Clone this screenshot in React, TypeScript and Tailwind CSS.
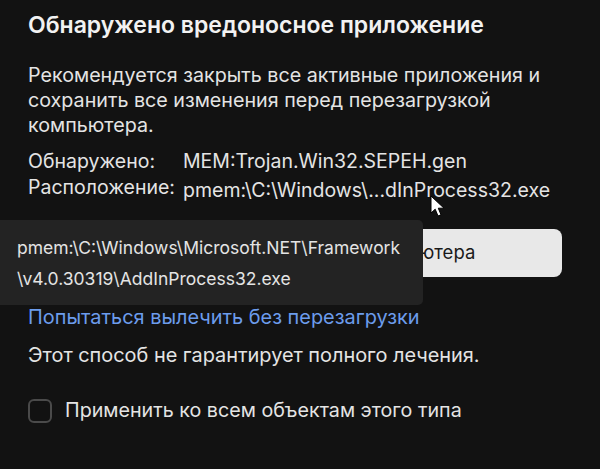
import React from "react";

export default function App() {
  return (
    <div
      className="relative w-[600px] h-[469px] overflow-hidden bg-[#121212] text-[#e4e4e4]"
      style={{ fontFamily: "Inter, 'Noto Sans', sans-serif" }}
    >
      <div className="flex flex-col pl-[28px] pr-[38px] pt-[10px]">
        <h1 className="text-[23px] leading-[30px] font-semibold text-[#f2f2f2]">
          Обнаружено вредоносное приложение
        </h1>
        <p className="mt-[23px] text-[19.7px] leading-[25px]">
          Рекомендуется закрыть все активные приложения и сохранить все изменения перед перезагрузкой компьютера.
        </p>
        <div className="mt-[10px] grid grid-cols-[155px_1fr] text-[19.5px] leading-[26px]">
          <div>Обнаружено:</div>
          <div>MEM:Trojan.Win32.SEPEH.gen</div>
          <div>Расположение:</div>
          <div className="translate-y-[3px]">pmem:\C:\Windows\...dInProcess32.exe</div>
        </div>
        <button className="mt-[29px] h-[48px] w-full rounded-[8px] bg-[#e8e8e8] text-[18.5px] text-[#1a1a1a]">
          Вылечить с перезагрузкой компьютера
        </button>
        <a className="mt-[28px] text-[19.9px] leading-[25px] text-[#6c9cec]">
          Попытаться вылечить без перезагрузки
        </a>
        <p className="mt-[13px] text-[19.9px] leading-[25px]">
          Этот способ не гарантирует полного лечения.
        </p>
        <label className="mt-[28px] flex items-center gap-[13px] text-[19.7px]">
          <span className="h-[24px] w-[24px] rounded-[6px] border-2 border-[#4a4a4a]" />
          <span>Применить ко всем объектам этого типа</span>
        </label>
      </div>

      <div className="absolute left-0 top-[220px] w-[423px] h-[85px] rounded-r-[5px] bg-[#232323] pl-[17px] pt-[12px] text-[17.5px] leading-[31px] text-[#e4e4e4]">
        <div>pmem:\C:\Windows\Microsoft.NET\Framework</div>
        <div>\v4.0.30319\AddInProcess32.exe</div>
      </div>

      <svg
        className="absolute left-[430px] top-[195px]"
        width="18"
        height="24"
        viewBox="0 0 18 24"
      >
        <path
          d="M1 1 L1 18 L5.2 14.2 L8 21 L11 19.8 L8.3 13.2 L14 13.2 Z"
          fill="#ffffff"
          stroke="#000000"
          strokeWidth="1"
          strokeLinejoin="round"
        />
      </svg>
    </div>
  );
}
